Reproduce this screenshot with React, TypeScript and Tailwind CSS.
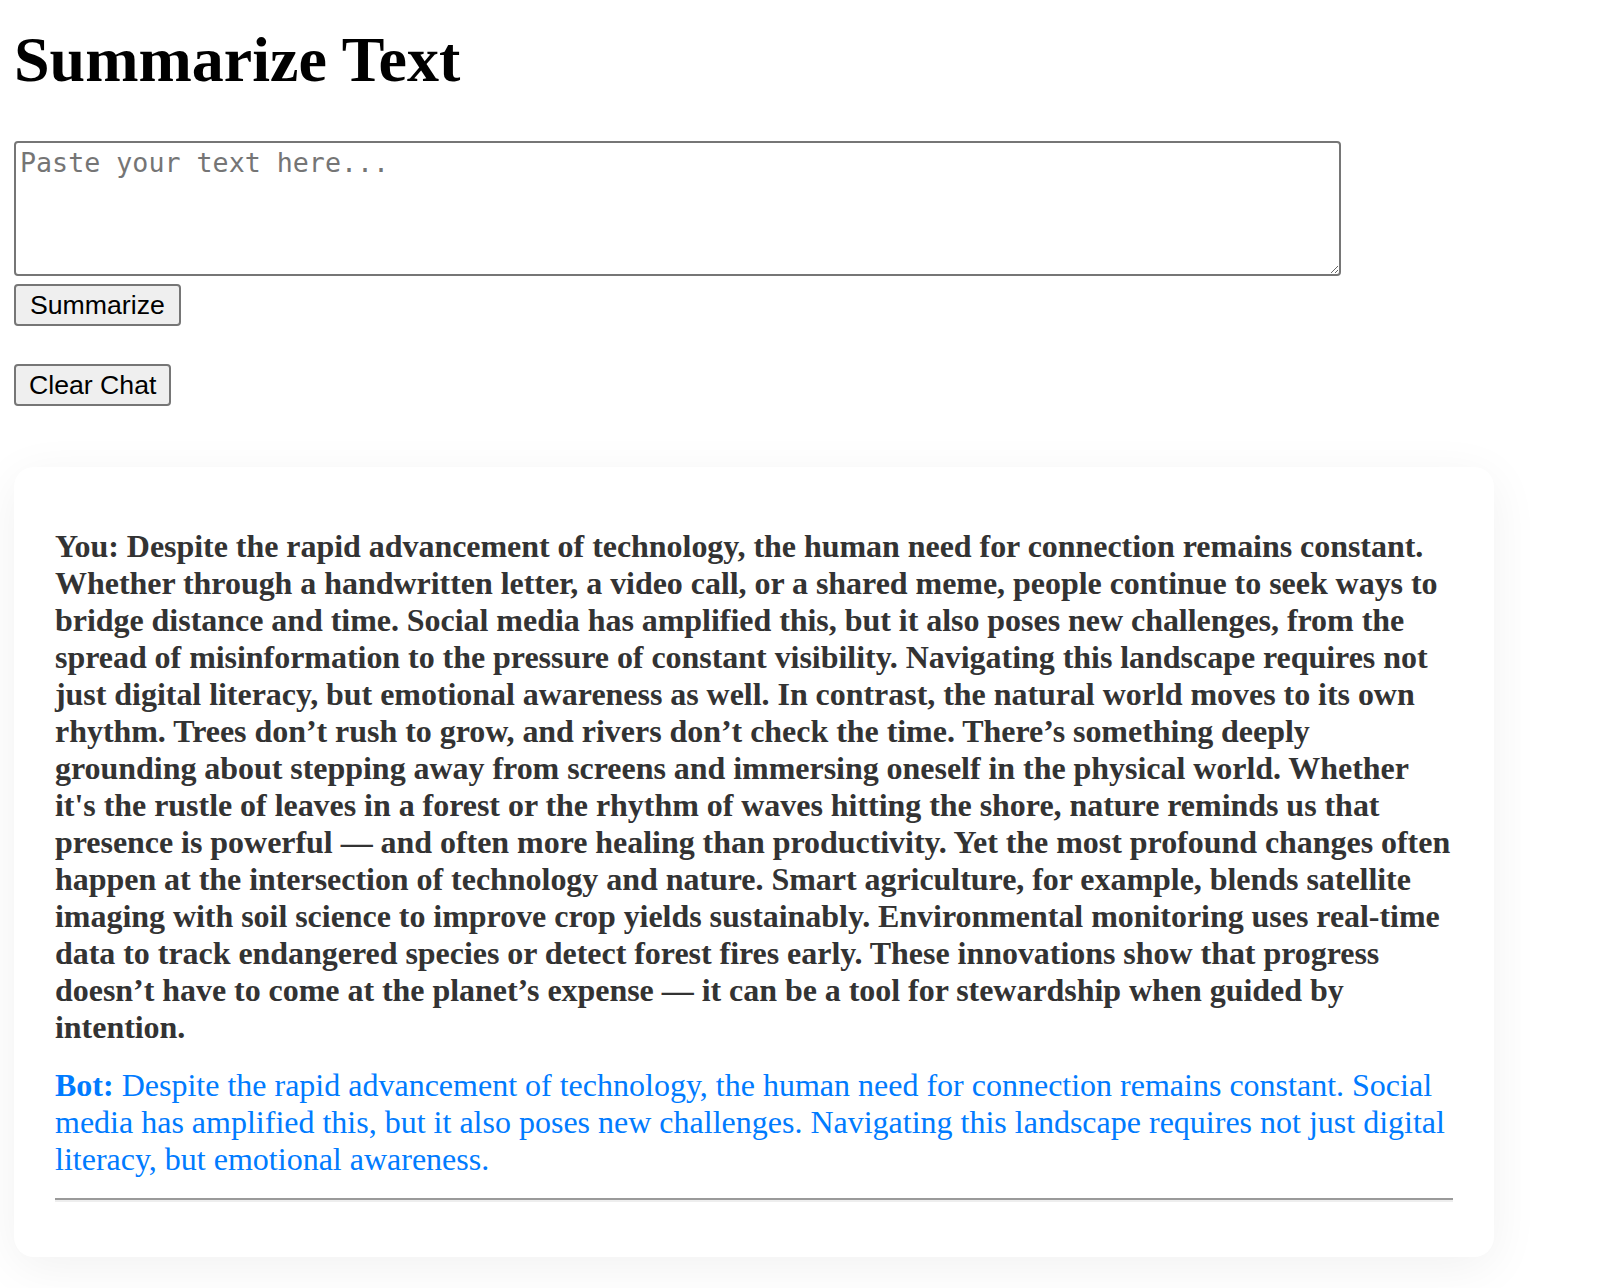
const userText =
  "Despite the rapid advancement of technology, the human need for connection remains constant. Whether through a handwritten letter, a video call, or a shared meme, people continue to seek ways to bridge distance and time. Social media has amplified this, but it also poses new challenges, from the spread of misinformation to the pressure of constant visibility. Navigating this landscape requires not just digital literacy, but emotional awareness as well. In contrast, the natural world moves to its own rhythm. Trees don’t rush to grow, and rivers don’t check the time. There’s something deeply grounding about stepping away from screens and immersing oneself in the physical world. Whether it's the rustle of leaves in a forest or the rhythm of waves hitting the shore, nature reminds us that presence is powerful — and often more healing than productivity. Yet the most profound changes often happen at the intersection of technology and nature. Smart agriculture, for example, blends satellite imaging with soil science to improve crop yields sustainably. Environmental monitoring uses real-time data to track endangered species or detect forest fires early. These innovations show that progress doesn’t have to come at the planet’s expense — it can be a tool for stewardship when guided by intention.";

const botText =
  "Despite the rapid advancement of technology, the human need for connection remains constant. Social media has amplified this, but it also poses new challenges. Navigating this landscape requires not just digital literacy, but emotional awareness.";

export default function App() {
  return (
    <div className="min-h-screen bg-white px-[14px] pt-[23px] pb-[32px] font-['Liberation_Serif',_'Times_New_Roman',_serif] text-black">
      <h1 className="text-[64px] font-bold leading-[normal]">Summarize Text</h1>

      <div className="mt-[44px] flex flex-col items-start">
        <textarea
          placeholder="Paste your text here..."
          className="h-[135px] w-[1327px] rounded-[4px] border-2 border-[#767676] bg-white px-[4px] py-[4px] font-['DejaVu_Sans_Mono',_monospace] text-[26.67px] leading-[normal] text-black placeholder:text-[#757575]"
        />
        <button className="mt-[8px] flex h-[42px] items-center rounded-[4px] border-2 border-[#767676] bg-[#efefef] px-[14px] font-['Liberation_Sans',_Arial,_sans-serif] text-[26.67px] leading-[normal] text-black">
          Summarize
        </button>
        <button className="mt-[38px] flex h-[42px] items-center rounded-[4px] border-2 border-[#767676] bg-[#efefef] px-[13px] font-['Liberation_Sans',_Arial,_sans-serif] text-[26.67px] leading-[normal] text-black">
          Clear Chat
        </button>
      </div>

      <div className="mt-[61px] w-[1480px] rounded-[20px] bg-white px-[41px] pt-[61px] pb-[55px] shadow-[0_10px_50px_rgba(0,0,0,0.06)]">
        <div className="text-[32px] font-bold leading-[normal] tracking-[-0.04px] text-[#333333]">
          You: {userText}
        </div>
        <div className="mt-[21px] text-[32px] leading-[normal] text-[#007bff]">
          <span className="font-bold">Bot:</span> {botText}
        </div>
        <div className="mt-[20px] h-[4px] border-t-2 border-b-2 border-t-[#9a9a9a] border-b-[#eeeeee]" />
      </div>
    </div>
  );
}
